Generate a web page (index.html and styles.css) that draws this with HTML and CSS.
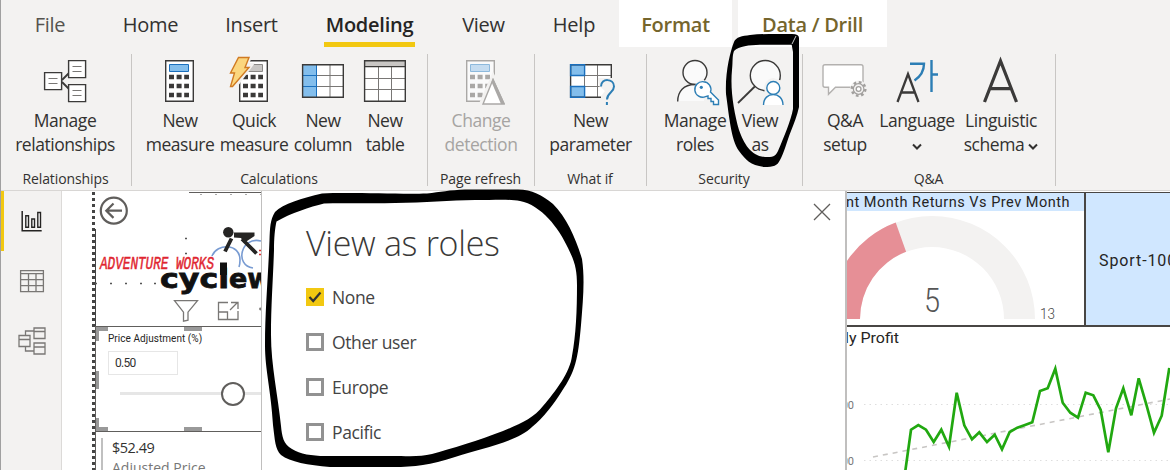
FILE: index.html
```
<!DOCTYPE html>
<html lang="en">
<head>
<meta charset="utf-8">
<title>View as roles</title>
<link rel="stylesheet" href="styles.css">
</head>
<body>
<div class="app">
  <nav class="tabs">
    <span class="tab file">File</span><span class="tab home">Home</span><span class="tab insert">Insert</span><span class="tab modeling"><b>Modeling</b></span><span class="tab view">View</span><span class="tab help">Help</span><span class="tab context format">Format</span><span class="tab context data">Data / Drill</span>
  </nav>
  <div class="ribbon">
    <section class="group g-rel">
      <div class="tools">
        <button class="tool w-wide"><svg viewBox="41 58 48 48"><g fill="#fff" stroke="#3b3a39" stroke-width="1.4"><path d="M62 80l7-7M62 82l7 7" stroke-width="1.8"/><path d="M44.600 72.600h17v17h-17zM68.600 60.600h17v17h-17zM68.600 84.600h17v17h-17z"/></g><path d="M48.500 78.500h9M48.500 83.500h9M72.500 66.500h9M72.500 71.500h9M72.500 90.500h9M72.500 95.500h9" stroke="#797775"/></svg><span>Manage<br>relationships</span></button>
      </div>
      <h2>Relationships</h2>
    </section>
    <section class="group g-calc">
      <div class="tools">
        <button class="tool w74"><svg viewBox="156 58 48 48"><path d="M165.700 60.700h27.600v40.600h-27.600z" fill="#fff" stroke="#3b3a39" stroke-width="1.4"/><path d="M169.500 64.500h19v7h-19z" fill="#83beec" stroke="#1a6fbd"/><path d="M169 77h20M169 86h20M169 95h20" stroke="#3b3a39" stroke-width="4.600" stroke-dasharray="5 2.600"/></svg><span>New<br>measure</span></button>
        <button class="tool w74"><svg viewBox="230 58 48 48"><path d="M239.700 60.700h27.600v40.600h-27.600z" fill="#fff" stroke="#3b3a39" stroke-width="1.4"/><path d="M243.500 64.500h19v7h-19z" fill="#c8c6c4" stroke="#8a8886"/><path d="M243 77h20M243 86h20M243 95h20" stroke="#3b3a39" stroke-width="4.600" stroke-dasharray="5 2.600"/><path d="M238 57h12l-4 8h5l-17 23h-5l3-13h-4z" fill="#fbd67e" stroke="#f3f2f1" stroke-width="4"/><path d="M238.500 57.500h10.500l-4 10h4L232.500 86.500h-2l4-13.500h-4z" fill="#fbd67e" stroke="#d07a22" stroke-width="1.4"/></svg><span>Quick<br>measure</span></button>
        <button class="tool w64"><svg viewBox="299 58 48 48"><path d="M302.600 64.700h40.700v32.600h-40.700z" fill="#fff"/><path d="M303 65h14v32h-14z" fill="#83beec"/><path d="M317 75.500h26M317 86.500h26M330 65v32" stroke="#797775"/><path d="M316.500 65v32M303 75.500h14M303 86.500h14" stroke="#1a6fbd"/><path d="M302.600 64.700h40.700v32.600h-40.700z" fill="none" stroke="#3b3a39" stroke-width="1.4"/></svg><span>New<br>column</span></button>
        <button class="tool w60"><svg viewBox="361 58 48 48"><path d="M364.600 60.700h40.700v40.600h-40.700z" fill="#fff"/><path d="M365 61h40v5.500h-40z" fill="#c8c6c4"/><path d="M365 78.500h40M365 89.500h40M378.500 67v34M391.500 67v34" stroke="#797775"/><path d="M364.600 60.700h40.700v40.600h-40.700zM365 66.600h40" fill="none" stroke="#3b3a39" stroke-width="1.4"/></svg><span>New<br>table</span></button>
      </div>
      <h2>Calculations</h2>
    </section>
    <section class="group g-page">
      <div class="tools">
        <button class="tool w-full disabled"><svg viewBox="457 58 48 48"><path d="M466.700 60.700h27.600v40.600h-27.600z" fill="#fafafa" stroke="#aaa8a6" stroke-width="1.400"/><path d="M470.500 64.500h19v7h-19z" fill="#c5dcf0" stroke="#8db9dc"/><path d="M470 77h20M470 86h20M470 95h20" stroke="#aaa8a6" stroke-width="4.600" stroke-dasharray="5 2.600"/><path d="M493 75l-13 30h28z" fill="#f3f2f1" stroke="#f3f2f1" stroke-width="3"/><path d="M493 79.500L483 104h21z" fill="#fff" stroke="#aaa8a6" stroke-width="1.400"/><path d="M493 78l12 26h-4L491.500 82z" fill="#aaa8a6"/></svg><span>Change<br>detection</span></button>
      </div>
      <h2>Page refresh</h2>
    </section>
    <section class="group g-what">
      <div class="tools">
        <button class="tool w-full"><svg viewBox="567 58 48 48"><path d="M570.600 64.700h40.700v32.600h-40.700z" fill="#fff"/><path d="M571 65h13.500v10.500h-13.500zM571 86.500h13.500v10.500h-13.500z" fill="#83beec"/><path d="M571 75.500h40M571 86.500h30M584.500 65v32M597.500 65v32" stroke="#797775"/><path d="M570.600 64.700h40.700v32.600h-40.700z" fill="none" stroke="#3b3a39" stroke-width="1.400"/><path d="M570.600 64.700h14v10.800h-14zM570.600 86.500h14v10.800h-14z" fill="none" stroke="#1a6fbd" stroke-width="1.400"/><path d="M598 78h18v29h-15V96l4-5-6-5z" fill="#f3f2f1"/><path d="M601 86.500c0-9 13-8 13 0 0 6-7 6-7 13M606.900 102v3" fill="none" stroke="#2c7eb5" stroke-width="2"/></svg><span>New<br>parameter</span></button>
      </div>
      <h2>What if</h2>
    </section>
    <section class="group g-sec">
      <div class="tools">
        <button class="tool w68"><svg viewBox="671 58 48 48"><path d="M678 101c0-11 6-17 16-17h10v17z" fill="#fafafa"/><circle cx="695" cy="72.500" r="12" fill="#fafafa" stroke="#3b3a39" stroke-width="1.400"/><path d="M677.700 101.500c0-10 6-17 17-17" fill="none" stroke="#3b3a39" stroke-width="1.400"/><path d="M703 79a10 10 0 1 0 3 20l8 9h8v-10z" fill="#f3f2f1"/><path d="M703.500 81.700a7.800 7.800 0 1 0 2 15l2.500-.7v2.500h3v3h2.500v3h5v-4.500L710.500 92a7.800 7.800 0 0 0-7-10.300z" fill="#fff" stroke="#2c7eb5" stroke-width="1.400"/><circle cx="701.300" cy="87.300" r="1.600" fill="#2c7eb5"/></svg><span>Manage<br>roles</span></button>
        <button class="tool w62"><svg viewBox="736 58 48 48"><circle cx="765.300" cy="75.500" r="15" fill="#fafafa" stroke="#3b3a39" stroke-width="1.400"/><path d="M754.800 86.500L738 103" stroke="#3b3a39" stroke-width="1.800"/><path d="M773.500 78a10 10 0 0 0-8 15l-5 13h25V82z" fill="#f3f2f1"/><circle cx="773.300" cy="88" r="6.500" fill="#fff" stroke="#2c7eb5" stroke-width="1.400"/><path d="M763.500 105c0-14 19.500-14 19.500 0" fill="#fff" stroke="#2c7eb5" stroke-width="1.400"/></svg><span>View<br>as</span></button>
      </div>
      <h2>Security</h2>
    </section>
    <section class="group g-qa">
      <div class="tools">
        <button class="tool w60"><svg viewBox="821 58 48 48"><path d="M825 64.700h36q2 0 2 2v20.600h-27.500l-7 7v-7H825q-2 0-2-2V66.700q0-2 2-2z" fill="#fff" stroke="#b3b1af" stroke-width="1.400"/><circle cx="858.600" cy="89" r="8.500" fill="#f3f2f1"/><circle cx="858.600" cy="89" r="6.800" fill="none" stroke="#a19f9d" stroke-width="2.400" stroke-dasharray="2.700 2.640"/><circle cx="858.600" cy="89" r="5.300" fill="#f3f2f1" stroke="#a19f9d" stroke-width="1.200"/><circle cx="858.600" cy="89" r="2.400" fill="#fff" stroke="#a19f9d" stroke-width="1.300"/></svg><span>Q&amp;A<br>setup</span></button>
        <button class="tool w84"><svg viewBox="893 58 48 48"><path d="M897.500 102l10.500-28 10.500 28M901 92.500h14" fill="none" stroke="#3b3a39" stroke-width="2.300"/><path d="M910 63.700h14c0 8-4 13-9.500 16.800M931.500 60v32M931.500 74.500h6.500" fill="none" stroke="#2c7eb5" stroke-width="2.400"/></svg><span>Language<br><svg class="chev" viewBox="0 0 10 7"><path d="M1 1.500l4 4 4-4"/></svg></span></button>
        <button class="tool w84"><svg viewBox="977 58 48 48"><path d="M984.500 102l16-41 16 41M990 88.700h21" fill="none" stroke="#3b3a39" stroke-width="3.200"/></svg><span>Linguistic<br>schema <svg class="chev" viewBox="0 0 10 7"><path d="M1 1.500l4 4 4-4"/></svg></span></button>
      </div>
      <h2>Q&amp;A</h2>
    </section>
  </div>
  <main class="workspace">
    <aside class="rail">
      <div class="rail-item active"><svg width="30" height="26" viewBox="17 208 30 26"><path d="M22.200 211v19.700h19.500" fill="none" stroke="#252423" stroke-width="1.500"/><path d="M25.800 215.700h2.700v11.500h-2.700zM31.800 219h2.700v8.200h-2.700zM37.800 212.500h2.700v14.700h-2.700z" fill="#fff" stroke="#252423" stroke-width="1.400"/></svg></div>
      <div class="rail-item"><svg width="30" height="26" viewBox="17 267 30 26"><path d="M20.600 269.600h22.800v21h-22.800zM20.600 272.600h22.800M20.600 278.600h22.800M20.600 284.600h22.800M28.500 273v18M36 273v18" fill="none" stroke="#797775" stroke-width="1.300"/></svg></div>
      <div class="rail-item"><svg width="30" height="30" viewBox="17 326 30 30"><path d="M19 335.500h11v11H19zM34 328h11v10.500H34zM34 343h11v11H34zM19 339.500h11M34 331.500h11M34 347h11M25.500 335v-4H34M25.500 347v4H34" fill="none" stroke="#797775" stroke-width="1.300"/></svg></div>
    </aside>
    <div class="report-left">
      <div class="page">
        <div class="brand">
          <svg width="166" height="134" viewBox="95 192 166 134">
            <path d="M189 192.500h72" stroke="#605e5c"/><path d="M200 194.500h61" stroke="#aaa" stroke-dasharray="2 13"/>
            <path d="M95.500 229v97" stroke="#444"/>
            <circle cx="113.800" cy="210.700" r="13" fill="none" stroke="#605e5c" stroke-width="2.200"/><path d="M122 210.700h-15.500M113.500 203.500l-7.200 7.200 7.200 7.200" fill="none" stroke="#605e5c" stroke-width="2.200"/>
            <path d="M185 238.500h2M185 253.500h2M110 283.500h2M125 283.500h2M140 283.500h2M154 283.500h2M95 283.500h2" stroke="#555" stroke-width="1.600"/>
            <path d="M212 256c5-13 28-13 28 4q0 4-1 7M261 241c-20-5-27 24-8 27" fill="none" stroke="#789bd2" stroke-width="1.600"/>
            <circle cx="228.300" cy="232.200" r="5.200" fill="#252423"/><path d="M242 239l14.500 14.500M231.500 238.500l-6.500 13" fill="none" stroke="#252423" stroke-width="3.800"/><path d="M234 232.500h20.500v3.500L244 243l-3-5-7-.5z" fill="#252423"/>
            <path d="M261 250.500h-2M261 254.500h-2" stroke="#d33" stroke-width="1.500"/>
            <text x="100" y="269" class="brand-red" textLength="114" lengthAdjust="spacingAndGlyphs">ADVENTURE WORKS</text>
            <text x="160" y="288" class="brand-black" textLength="69" lengthAdjust="spacingAndGlyphs">cycl</text>
            <path d="M220 262.500h7V275h-7z" fill="#111"/>
            <text x="229" y="288" class="brand-black">ew</text>
            <path d="M174.500 300.700h23l-9.500 11.500v8l-4.500 1v-9z" fill="none" stroke="#797775" stroke-width="1.300"/>
            <path d="M228 302.500h-9.500v17h19.500V311M218.500 312h9v7.500M230 310l7.500-7.500M231 302.500h7v6.500" fill="none" stroke="#797775" stroke-width="1.300"/>
            <circle cx="260.500" cy="309" r="1.400" fill="#797775"/>
          </svg>
        </div>
        <div class="slicer">
          <i class="handle h1"></i><i class="handle h2"></i><i class="handle h3"></i><i class="handle h4"></i><i class="handle h5"></i><i class="handle h6"></i><i class="handle h7"></i>
          <div class="slicer-title">Price Adjustment (%)</div>
          <div class="slicer-input">0.50</div>
          <div class="track"><div class="thumb"></div></div>
        </div>
        <div class="kpi"><div class="kpi-body"><strong>$52.49</strong><span>Adjusted Price</span></div></div>
      </div>
    </div>
    <section class="dialog">
      <div class="dialog-body">
        <h1>View as roles</h1>
        <label class="role"><span class="box checked"><svg width="18" height="18" viewBox="0 0 18 18"><path d="M3.500 9l3.700 4 7.300-8.500" fill="none" stroke="#333" stroke-width="2.200"/></svg></span>None</label>
        <label class="role"><span class="box"></span>Other user</label>
        <label class="role"><span class="box"></span>Europe</label>
        <label class="role"><span class="box"></span>Pacific</label>
      </div>
      <svg class="close" width="18" height="18" viewBox="0 0 18 18"><path d="M1 1l16 16M17 1L1 17" stroke="#605e5c" stroke-width="1.300"/></svg>
    </section>
    <div class="report-right">
      <div class="top-tiles">
        <div class="gauge">
          <div class="gauge-title"><span>nt Month Returns Vs Prev Month</span></div>
          <svg width="237" height="114" viewBox="847 211 237 114">
            <path d="M829 319a103 103 0 0 1 206 0h-31a72 72 0 0 0-144 0z" fill="#f3f2f1"/>
            <path d="M829 319a103 103 0 0 1 66.700-96.400l10.400 29.100A72 72 0 0 0 860 319z" fill="#e68f96"/>
            <text x="924" y="311.500" class="gauge-value" textLength="16" lengthAdjust="spacingAndGlyphs">5</text>
            <text x="1040" y="319" class="gauge-max" textLength="15" lengthAdjust="spacingAndGlyphs">13</text>
          </svg>
        </div>
        <div class="product">Sport-100</div>
      </div>
      <svg class="line-chart" width="323" height="143" viewBox="847 327 323 143">
        <text x="899" y="343" text-anchor="end" class="chart-title" textLength="54" lengthAdjust="spacingAndGlyphs">ly Profit</text>
        <text x="854" y="408.500" text-anchor="end" class="axis">00</text><text x="854" y="464.500" text-anchor="end" class="axis">00</text>
        <path d="M864 404.500h306M864 460.500h306" stroke="#dedede" stroke-dasharray="1.500 4"/>
        <path d="M873 457l297-58" stroke="#c8c6c4" stroke-width="1.600" stroke-dasharray="5 5"/>
        <path d="M905.300 471L911 429.700 918.300 425 926 429.700 933.700 442 941.300 429.700 949 446.700 956.700 392.700 964.300 425.300 972 439.300 979.300 432.300 987 442 994.700 434.700 1002 449.300 1009.700 432 1017.300 427.700 1025 425 1032.300 422.300 1040 391 1047.700 388.300 1055.300 368.700 1062.700 402.700 1070.300 412.700 1078 417.700 1085.700 392.700 1093.300 395.300 1100.700 410 1108.300 452.300 1116 408.300 1123.300 388.300 1131.300 415.300 1138.700 378.300 1146.300 404.300 1154 432.700 1161.700 415.700 1169.300 368" fill="none" stroke="#21a810" stroke-width="2.700"/>
      </svg>
    </div>
  </main>
  <svg class="ink" width="1170" height="470" viewBox="0 0 1170 470">
    <path fill-rule="evenodd" d="M275 212C283 204 302 198 322 193.500C350 192 400 194.500 427 193.500C440 192 450 190 465 189.500H518C532 189.500 542 195 553 204C567 218 576 239 582 259C585 280 583 300 581 325C578 360 575 372 562 391C553 405 544 417 532 427C517 442 480 449 455 457C430 465 415 467 393 467H330C308 465 290 462 281 455C275 449 275 441 273 425C271 390 265 370 265 345C265 310 268 280 269.500 240C270 228 270 220 275 212ZM276.500 221.500C291 213 310 207 324 203.500C345 202.500 370 204 395 203C425 203 450 200 475 200C495 200 510 199 520 201C541 205 559 228 568 248C575 262 577 270 577 285C577 310 576 335 572 356C570 372 556 391 543 406C534 418 520 424 503 431C480 440 450 449 432 454C420 457 410 456 390 456H325C312 456 300 454 292 449C283 444 282 436 281 426C278 396 271 365 271 335C271 305 273 280 274 250C274 238 275 228 276.500 221.500Z"/>
    <path fill-rule="evenodd" d="M734 42C736 37 742 36 750 35C765 33.500 780 34 792 34Q799 34 799 38V107C797 116 794 123 791 131C787 141 784 153 780 160C777 166 774 167 764 167C750 165 746 160 739 151C731 140 729 115 726 94C725 73 730 52 734 42ZM734 51C739 46 749 45 760 44.700H791.700L793 52V109C791 120 784 137 778 151C775 157 773 157 765 157C751 156 744 144 739 130C734 112 730 90 732 70C733 62 732 56 734 51Z"/>
    <path d="M796 36l-4 8" stroke="#fff" stroke-width=".8"/>
  </svg>
</div>
</body>
</html>
```
FILE: styles.css
```
* { box-sizing: border-box; }
body { margin: 0; font-family: "Open Sans", "Noto Sans", sans-serif; color: #323130; }
button { font: inherit; color: inherit; background: none; border: 0; padding: 0; }
h1, h2 { margin: 0; font-weight: 400; }

.app { position: relative; width: 1170px; height: 470px; overflow: hidden; background: #f3f2f1; display: flex; flex-direction: column; border-left: 1px solid #a0a0a0; }

.tabs { display: flex; height: 47px; flex: none; font-size: 20px; letter-spacing: -.25px; }
.tab { display: flex; justify-content: center; line-height: 49px; white-space: nowrap; height: 47px; }
.file { width: 98px; color: #55534f; }
.home { width: 103px; }
.insert { width: 99px; }
.modeling { width: 137px; color: #252423; }
.modeling b { font-weight: 600; width: 91px; border-bottom: 5px solid #f2c811; height: 47px; text-align: center; }
.view { width: 91px; }
.help { width: 90px; }
.context { background: #fff; color: #75652c; font-weight: 600; }
.format { width: 113px; margin-right: 6px; }
.data { width: 149px; }

.ribbon { display: flex; height: 143px; flex: none; padding-top: 7px; }
.group { height: 132px; border-right: 1px solid #c8c6c4; display: flex; flex-direction: column; justify-content: space-between; }
.g-rel { width: 131px; }
.g-calc { width: 296px; }
.g-page { width: 107px; }
.g-what { width: 112px; }
.g-sec { width: 156px; }
.g-qa { width: 253px; }
.tools { display: flex; padding-top: 4px; }
.g-calc .tools { padding-left: 11px; }
.g-sec .tools { padding-left: 14px; }
.g-qa .tools { padding-left: 12px; }
.group h2 { font-size: 14px; line-height: 17px; height: 16px; text-align: center; letter-spacing: -.1px; padding-right: 1px; }
.tool { display: flex; flex-direction: column; align-items: center; flex: none; font-size: 17.500px; line-height: 24px; letter-spacing: -.45px; white-space: nowrap; text-align: center; }
.tool > svg { width: 48px; height: 48px; margin-bottom: 2px; flex: none; overflow: visible; }
.disabled { color: #a6a4a2; }
.w-wide { width: 128px; }
.w-full { width: 100%; }
.w84 { width: 84px; }
.w74 { width: 74px; }
.w68 { width: 68px; }
.w64 { width: 64px; }
.w62 { width: 62px; }
.w60 { width: 60px; }
.chev { width: 10px; height: 7px; fill: none; stroke: #323130; stroke-width: 2; vertical-align: 1px; }

.workspace { display: flex; flex: 1; min-height: 0; border-top: 1px solid #d8d6d4; }
.rail { width: 61px; flex: none; border-right: 1px solid #dcdad8; }
.rail-item { height: 60px; display: flex; align-items: center; justify-content: center; border-left: 3px solid transparent; padding-right: 2px; }
.rail-item.active { border-left-color: #f2c811; }

.report-left { width: 199px; flex: none; background: #fff; padding: 1px 0 0 30px; overflow: hidden; }
.page { height: 278px; padding-left: 3px; background: repeating-linear-gradient(#444 0 3px, #fff 3px 6px) left / 3px 100% no-repeat; }
.brand { height: 134px; }
.brand svg { display: block; }
.brand-red { font: italic 400 18px "Liberation Mono", monospace; fill: #df2530; stroke: #df2530; stroke-width: .5px; }
.brand-black { font: 700 27px "DejaVu Sans", sans-serif; fill: #111; stroke: #111; stroke-width: .8px; }
.slicer { position: relative; height: 106px; border: 1px solid #605e5c; border-width: 1px 0 1px 1px; padding: 5px 0 0 12px; }
.slicer-title { font: 10px/13px Roboto, sans-serif; letter-spacing: .05px; color: #252423; }
.slicer-input { width: 70px; height: 24px; margin-top: 6px; border: 1px solid #e6e6e6; padding-left: 6px; font: 12px/22px Roboto, sans-serif; letter-spacing: -.7px; }
.track { height: 3px; background: #e6e6e6; margin: 17px 0 0 12px; display: flex; align-items: center; padding-left: 101px; }
.thumb { width: 24px; height: 24px; border: 2px solid #605e5c; border-radius: 50%; background: #fff; flex: none; }
.handle { position: absolute; background: #999; }
.h1 { left: 0; top: 0; width: 12px; height: 4px; }
.h2 { left: 0; top: 0; width: 3px; height: 14px; }
.h3 { left: 88px; top: 0; width: 18px; height: 4px; }
.h4 { left: 0; top: 44px; width: 3px; height: 18px; }
.h5 { left: 0; bottom: 0; width: 12px; height: 4px; }
.h6 { left: 0; bottom: 0; width: 3px; height: 13px; }
.h7 { left: 88px; bottom: 0; width: 18px; height: 4px; }
.kpi { border-left: 1px solid #605e5c; padding: 6px 0 0 5px; }
.kpi-body { border-left: 2px solid #c0c0c0; height: 60px; padding-left: 9px; font-size: 14px; line-height: 20px; display: flex; flex-direction: column; }
.kpi-body strong { font-weight: 400; font-size: 14.500px; letter-spacing: -.5px; }
.kpi-body span { color: #777; }

.dialog { width: 586px; flex: none; background: #fff; border: 1px solid #c0bfbe; border-width: 0 2px 0 1px; display: flex; justify-content: space-between; align-items: flex-start; padding: 12px 14px 0 44px; }
.dialog h1 { font-size: 34px; font-weight: 300; line-height: 48px; margin: 16px 0 17px; letter-spacing: -.3px; color: #3a3938; }
.role { display: flex; align-items: center; height: 25px; margin-bottom: 20px; font-size: 17.500px; letter-spacing: -.4px; color: #444; }
.box { width: 18px; height: 18px; border: 3px solid #929292; margin-right: 8px; }
.box.checked { border: 0; background: #f2c811; }
.box svg { display: block; }

.report-right { width: 323px; flex: none; background: #fff; padding-top: 1px; }
.top-tiles { display: flex; height: 135px; border: 1px solid #484644; border-width: 1px 0 2px; }
.gauge { width: 237px; overflow: hidden; }
.gauge-title { height: 18px; background: #d0e7ff; display: flex; justify-content: flex-end; padding-right: 14px; white-space: nowrap; font: 14.500px/20px Roboto, sans-serif; color: #252423; letter-spacing: .5px; }
.gauge svg { display: block; }
.product { flex: 1; overflow: hidden; white-space: nowrap; border-left: 2px solid #484644; background: #d0e7ff; padding-left: 13px; font: 16px/136px Roboto, sans-serif; letter-spacing: .9px; color: #252423; }
.gauge-value { font: 300 33px Roboto, sans-serif; fill: #555; }
.gauge-max { font: 300 15px Roboto, sans-serif; fill: #444; }
.chart-title { font: 15px Roboto, sans-serif; fill: #252423; }
.axis { font: 11px Roboto, sans-serif; fill: #777; }
.line-chart { display: block; }
.ink { position: absolute; left: -1px; top: 0; pointer-events: none; }
```
